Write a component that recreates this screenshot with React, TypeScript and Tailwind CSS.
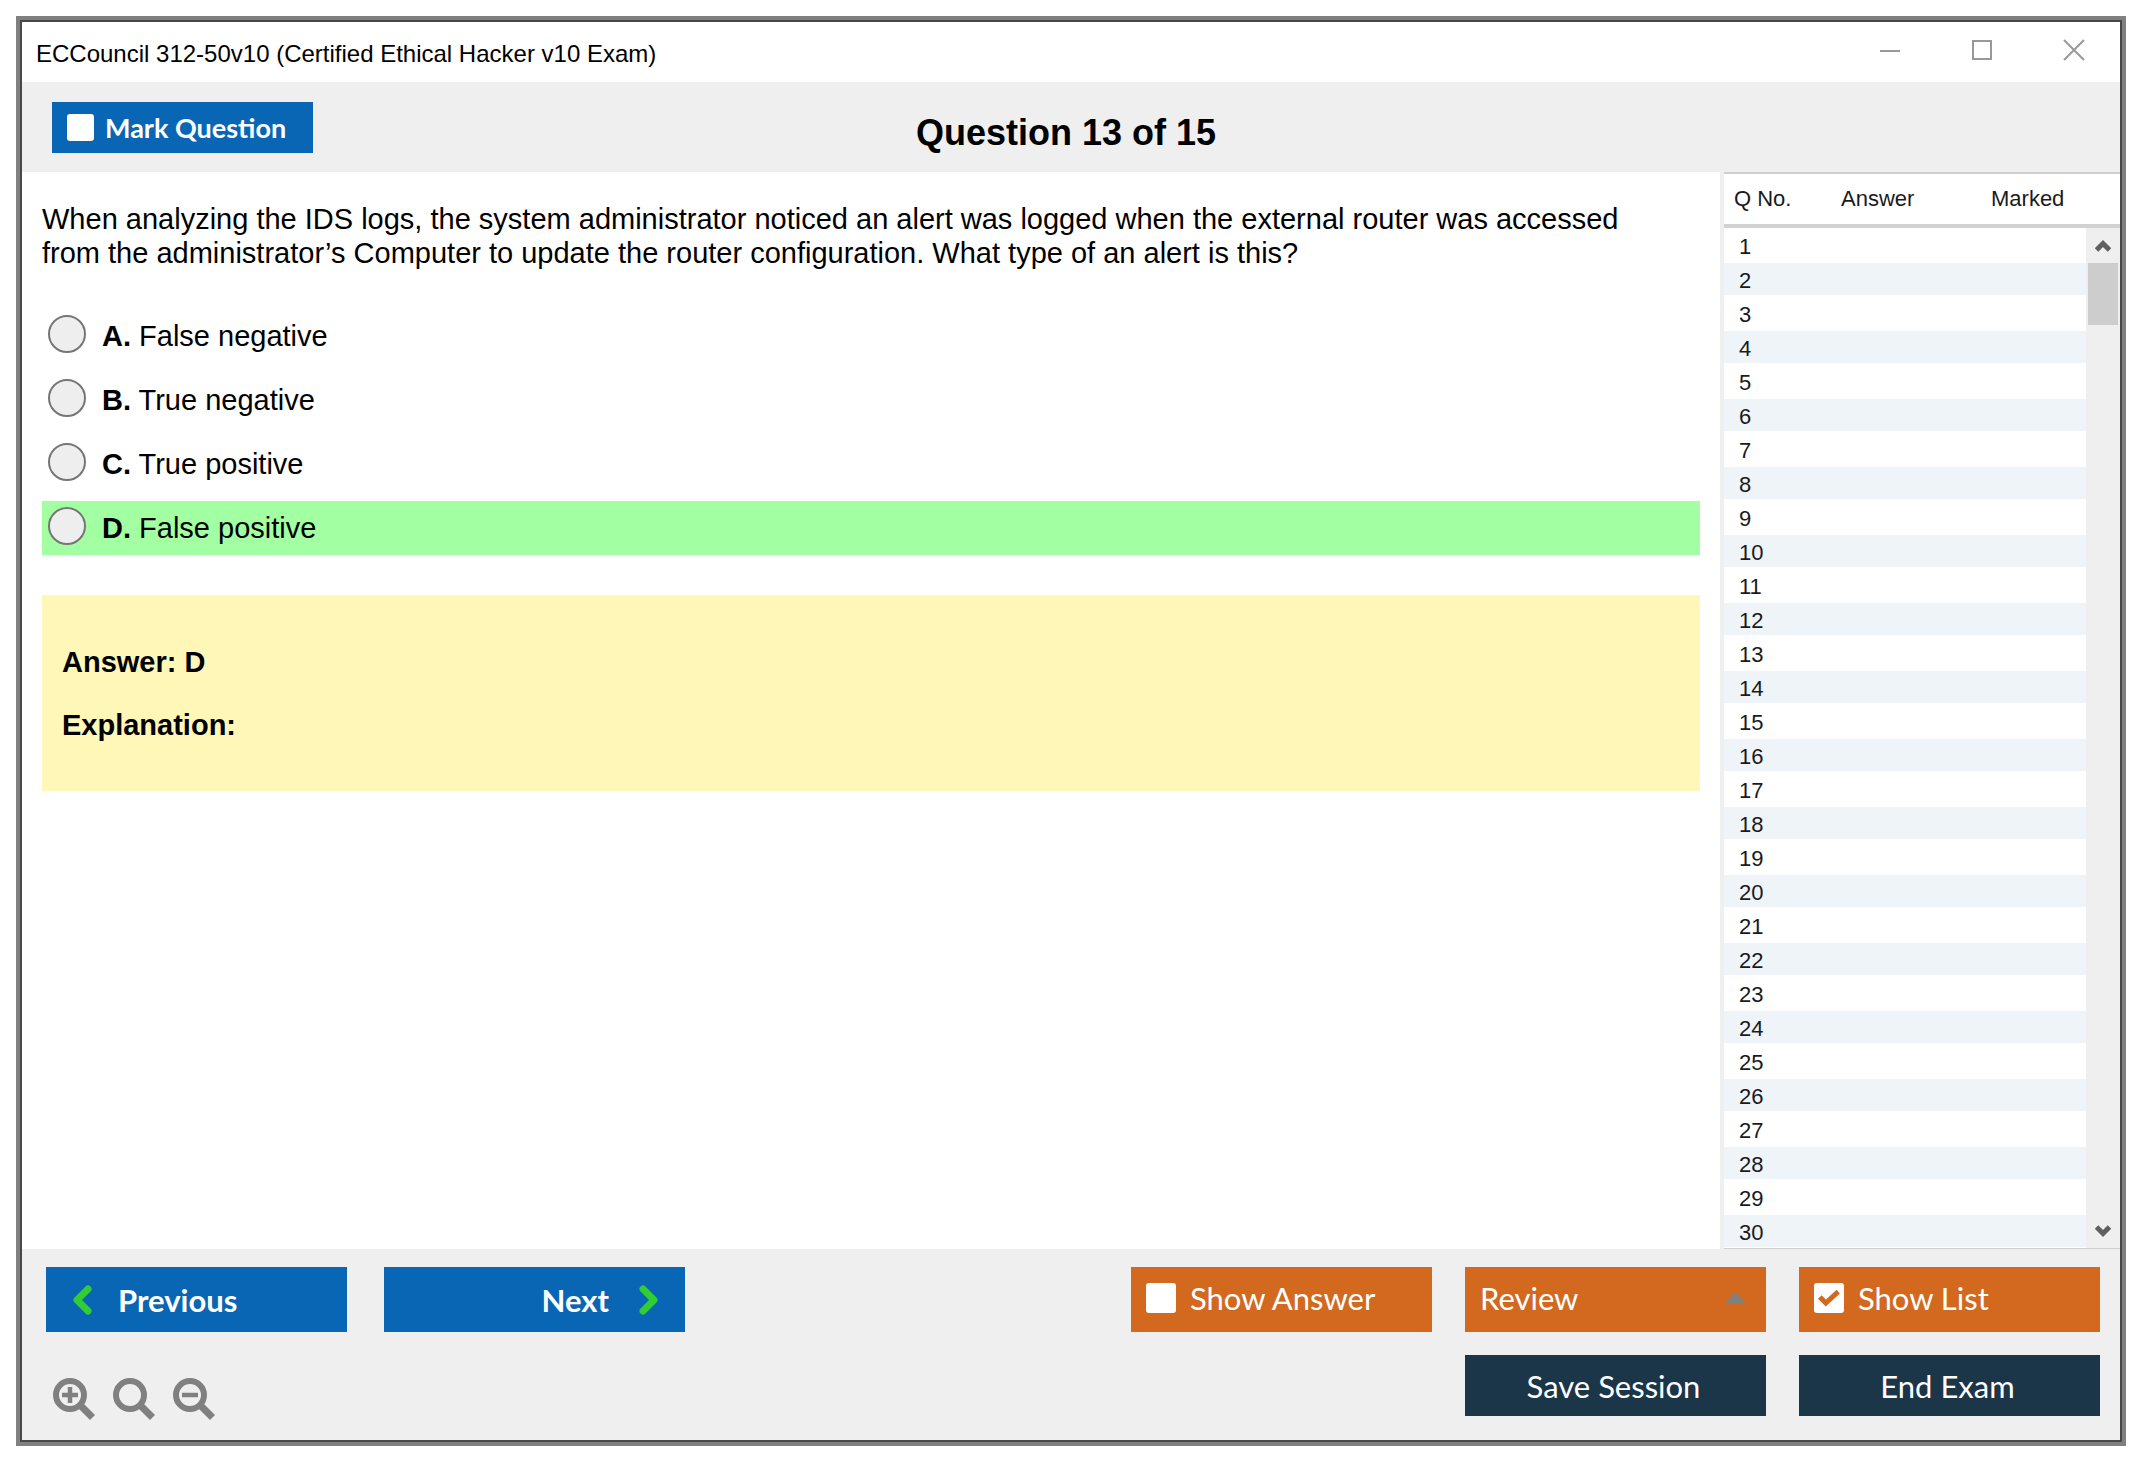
import React, { useState } from 'react';

const options = [
  { letter: 'A', text: 'False negative' },
  { letter: 'B', text: 'True negative' },
  { letter: 'C', text: 'True positive' },
  { letter: 'D', text: 'False positive', correct: true }
];

const questions = Array.from({ length: 30 }, (_, i) => i + 1);

interface CheckProps {
  label: string;
  defaultChecked?: boolean;
  className: string;
  boxClassName?: string;
}

const CheckButton: React.FC<CheckProps> = ({ label, defaultChecked = false, className, boxClassName = 'w-[30px] h-[30px]' }) => {
  const [checked, setChecked] = useState(defaultChecked);

  return (
    <label className={`flex items-center text-white ${className}`}>
      <span className="grid shrink-0">
        <input
          type="checkbox"
          checked={checked}
          onChange={() => setChecked(!checked)}
          className={`col-start-1 row-start-1 appearance-none bg-white rounded-[3px] ${boxClassName}`}
        />
        {checked && (
          <svg
            className="col-start-1 row-start-1 place-self-center pointer-events-none"
            width="22" height="18" viewBox="0 0 22 18" fill="none" stroke="#d2691e" strokeWidth="5"
          >
            <path d="M1.8 8l6 6L20.2 2.6" />
          </svg>
        )}
      </span>
      {label}
    </label>
  );
};

const Chevron: React.FC<{ d: string }> = ({ d }) => (
  <svg width="19" height="30" viewBox="0 0 19 30" fill="none" stroke="#32cd32" strokeWidth="7" strokeLinecap="round" strokeLinejoin="round">
    <path d={d} />
  </svg>
);

const ScrollArrow: React.FC<{ d: string }> = ({ d }) => (
  <svg width="16" height="13" viewBox="0 0 16 13" fill="none" stroke="#606060" strokeWidth="5">
    <path d={d} />
  </svg>
);

const Magnifier: React.FC<{ mark?: string }> = ({ mark }) => (
  <svg width="42" height="42" viewBox="0 0 42 42" fill="none" stroke="#808080">
    <circle cx="17" cy="17" r="14" strokeWidth="6" />
    <path d="M27 27l12.5 12.5" strokeWidth="7" />
    {mark && <path d={mark} strokeWidth="4.5" />}
  </svg>
);

const TitleBar: React.FC = () => (
  <header className="flex items-start justify-between h-[60px] pt-[17px] pl-[14px] pr-[35px] bg-white">
    <h1 className="text-[24px] leading-[30px]">ECCouncil 312-50v10 (Certified Ethical Hacker v10 Exam)</h1>
    <div className="flex items-center gap-[70px] text-[#999999]">
      <button aria-label="Minimize">
        <svg width="22" height="22" viewBox="0 0 22 22" stroke="currentColor" strokeWidth="2"><path d="M1 12h20" /></svg>
      </button>
      <button aria-label="Maximize">
        <svg width="22" height="22" viewBox="0 0 22 22" fill="none" stroke="currentColor" strokeWidth="2"><path d="M2 2h18v18H2z" /></svg>
      </button>
      <button aria-label="Close">
        <svg width="22" height="22" viewBox="0 0 22 22" stroke="currentColor" strokeWidth="2"><path d="M1 1l20 20M21 1L1 21" /></svg>
      </button>
    </div>
  </header>
);

const QuestionList: React.FC = () => (
  <aside className="flex w-[400px] shrink-0 border-l-4 border-[#efefef] text-[22px] leading-[28px] text-[#1a1a1a]">
    <div className="flex flex-1 border-t-2 border-b border-[#cfcfcf]">
      <table className="flex-1 table-fixed border-separate border-spacing-0">
        <thead>
          <tr className="h-[54px] text-left">
            <th className="w-[104px] p-0 pl-[10px] font-normal border-b-4 border-[#d2d2d2]">Q No.</th>
            <th className="w-[150px] p-0 pl-[13px] font-normal border-b-4 border-[#d2d2d2]">Answer</th>
            <th className="p-0 pl-[13px] font-normal border-b-4 border-[#d2d2d2]">Marked</th>
          </tr>
        </thead>
        <tbody>
          {questions.map((n) => (
            <tr key={n} className="h-[34px] even:bg-[#eff4f9]">
              <td className="p-0 pt-1 pl-[15px] border-y border-white">{n}</td>
              <td className="p-0 border-y border-white" />
              <td className="p-0 border-y border-white" />
            </tr>
          ))}
        </tbody>
      </table>
      <div className="flex flex-col w-[34px]">
        <div className="h-[54px] border-b-4 border-[#d2d2d2]" />
        <div className="flex flex-1 flex-col items-center bg-[#efefef]">
          <button aria-label="Scroll up" className="grid place-items-center h-[35px]"><ScrollArrow d="M1.5 11L8 4.5 14.5 11" /></button>
          <div className="w-[30px] h-[62px] bg-[#cdcdcd]" />
          <button aria-label="Scroll down" className="grid place-items-center h-[34px] mt-auto"><ScrollArrow d="M1.5 2L8 8.5 14.5 2" /></button>
        </div>
      </div>
    </div>
  </aside>
);

const App: React.FC = () => {
  return (
    <div className="min-h-screen bg-white pt-4 pl-4 pr-6 pb-6 flex font-['Liberation_Sans',Arial,sans-serif] text-black">
      <div className="flex flex-1 border-4 border-[#808080]">
        <div className="flex flex-1 flex-col border-2 border-[#484848]">
          <TitleBar />

          {/* Question heading */}
          <div className="grid grid-cols-[1fr_auto_1fr] items-end h-[90px] pb-[19px] pl-[30px] pr-[40px] bg-[#efefef]">
            <CheckButton
              label="Mark Question"
              className="w-[261px] h-[51px] pl-[15px] gap-[11px] bg-[#0866b5] font-['Lato',sans-serif] font-bold text-[27px] leading-[34px]"
              boxClassName="w-[27px] h-[27px]"
            />
            <h2 className="text-[36px] leading-[40px] font-bold">Question 13 of 15</h2>
          </div>

          <div className="flex flex-1">
            <main className="flex-1 pt-[30px] px-5 text-[29px] leading-[34px]">
              <p className="max-w-[1620px]">
                When analyzing the IDS logs, the system administrator noticed an alert was logged when the external router was accessed
                from the administrator’s Computer to update the router configuration. What type of an alert is this?
              </p>

              <div className="flex flex-col gap-[10px] mt-[39px]">
                {options.map((option) => (
                  <label
                    key={option.letter}
                    className={`flex items-start gap-4 h-[54px] pt-[6px] pl-[6px] ${option.correct ? 'bg-[#a2ffa2]' : ''}`}
                  >
                    <input
                      type="radio"
                      name="answer"
                      className="appearance-none w-[38px] h-[38px] rounded-full border-2 border-[#767676] bg-[#eeeeee] checked:bg-[#767676]"
                    />
                    <span className="leading-[42px]"><b>{option.letter}.</b> {option.text}</span>
                  </label>
                ))}
              </div>

              {/* Answer box */}
              <div className="flex flex-col justify-center gap-[29px] h-[196px] mt-10 px-5 bg-[#fef7b8] font-bold">
                <p>Answer: D</p>
                <p>Explanation:</p>
              </div>
            </main>
            <QuestionList />
          </div>

          {/* Bottom controls */}
          <footer className="flex justify-between pt-[18px] pb-5 pl-6 pr-5 bg-[#efefef] font-['Lato',sans-serif] text-[31px] leading-[36px] text-white">
            <div className="flex flex-col gap-[46px]">
              <div className="flex gap-[37px] font-bold">
                <button className="flex items-center gap-[26px] w-[301px] h-[65px] pl-[27px] bg-[#0866b5]">
                  <Chevron d="M15 4L4 15l11 11" />
                  Previous
                </button>
                <button className="flex items-center justify-end gap-[30px] w-[301px] h-[65px] pr-[27px] bg-[#0866b5]">
                  Next
                  <Chevron d="M4 4l11 11L4 26" />
                </button>
              </div>
              <div className="flex gap-[18px] pl-[7px]">
                <button aria-label="Zoom in"><Magnifier mark="M9 17h16M17 9v16" /></button>
                <button aria-label="Reset zoom"><Magnifier /></button>
                <button aria-label="Zoom out"><Magnifier mark="M9 17h16" /></button>
              </div>
            </div>

            <div className="grid grid-cols-[301px_301px_301px] gap-x-[33px] gap-y-[23px] content-start">
              <CheckButton label="Show Answer" className="h-[65px] pb-[3px] pl-[15px] gap-[14px] bg-[#d2691e]" />
              <button className="flex items-center justify-between h-[65px] pb-[3px] pl-[15px] pr-5 bg-[#d2691e]">
                Review
                <svg width="22" height="12" viewBox="0 0 22 12" fill="#808080"><path d="M11 0l11 12H0z" /></svg>
              </button>
              <CheckButton label="Show List" defaultChecked className="h-[65px] pb-[3px] pl-[15px] gap-[14px] bg-[#d2691e]" />
              <button className="col-start-2 h-[61px] pr-1 bg-[#1b3549]">Save Session</button>
              <button className="h-[61px] pr-1 bg-[#1b3549]">End Exam</button>
            </div>
          </footer>
        </div>
      </div>
    </div>
  );
};

export default App;
